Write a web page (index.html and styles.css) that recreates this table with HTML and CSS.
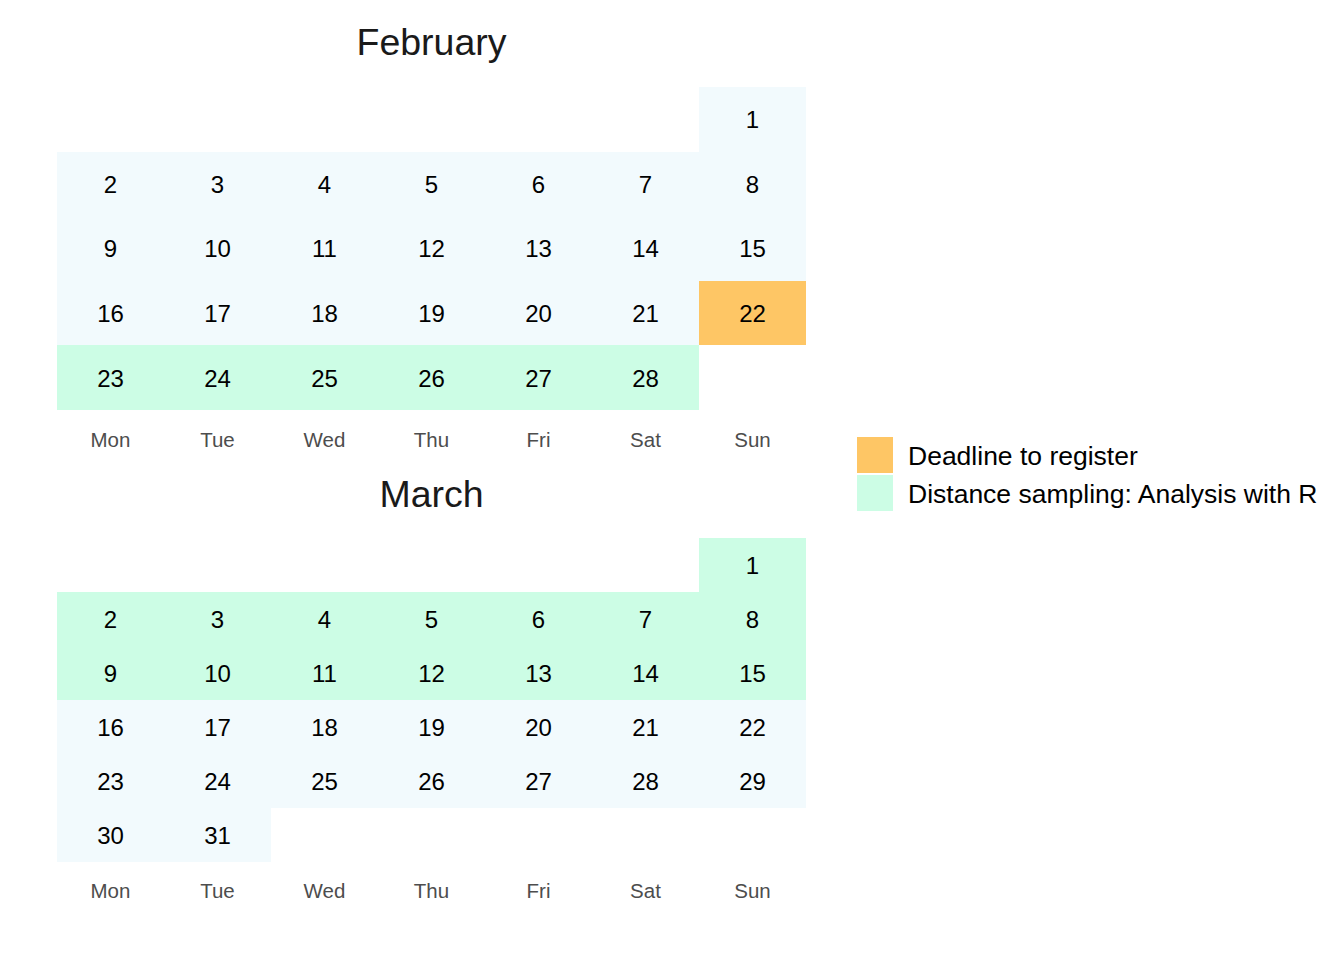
FILE: index.html
```html
<!DOCTYPE html>
<html>
<head>
<meta charset="utf-8">
<link rel="stylesheet" href="styles.css">
</head>
<body>
<div class="page">
  <div class="calendar">
    <div class="month">
      <div class="title feb-title">February</div>
      <div class="grid feb-grid">
        <div class="cell"></div><div class="cell"></div><div class="cell"></div><div class="cell"></div><div class="cell"></div><div class="cell"></div><div class="cell b">1</div>
        <div class="cell b">2</div><div class="cell b">3</div><div class="cell b">4</div><div class="cell b">5</div><div class="cell b">6</div><div class="cell b">7</div><div class="cell b">8</div>
        <div class="cell b">9</div><div class="cell b">10</div><div class="cell b">11</div><div class="cell b">12</div><div class="cell b">13</div><div class="cell b">14</div><div class="cell b">15</div>
        <div class="cell b">16</div><div class="cell b">17</div><div class="cell b">18</div><div class="cell b">19</div><div class="cell b">20</div><div class="cell b">21</div><div class="cell o">22</div>
        <div class="cell g">23</div><div class="cell g">24</div><div class="cell g">25</div><div class="cell g">26</div><div class="cell g">27</div><div class="cell g">28</div><div class="cell"></div>
      </div>
      <div class="days feb-days">
        <span>Mon</span><span>Tue</span><span>Wed</span><span>Thu</span><span>Fri</span><span>Sat</span><span>Sun</span>
      </div>
    </div>
    <div class="month">
      <div class="title mar-title">March</div>
      <div class="grid mar-grid">
        <div class="cell"></div><div class="cell"></div><div class="cell"></div><div class="cell"></div><div class="cell"></div><div class="cell"></div><div class="cell g">1</div>
        <div class="cell g">2</div><div class="cell g">3</div><div class="cell g">4</div><div class="cell g">5</div><div class="cell g">6</div><div class="cell g">7</div><div class="cell g">8</div>
        <div class="cell g">9</div><div class="cell g">10</div><div class="cell g">11</div><div class="cell g">12</div><div class="cell g">13</div><div class="cell g">14</div><div class="cell g">15</div>
        <div class="cell b">16</div><div class="cell b">17</div><div class="cell b">18</div><div class="cell b">19</div><div class="cell b">20</div><div class="cell b">21</div><div class="cell b">22</div>
        <div class="cell b">23</div><div class="cell b">24</div><div class="cell b">25</div><div class="cell b">26</div><div class="cell b">27</div><div class="cell b">28</div><div class="cell b">29</div>
        <div class="cell b">30</div><div class="cell b">31</div><div class="cell"></div><div class="cell"></div><div class="cell"></div><div class="cell"></div><div class="cell"></div>
      </div>
      <div class="days mar-days">
        <span>Mon</span><span>Tue</span><span>Wed</span><span>Thu</span><span>Fri</span><span>Sat</span><span>Sun</span>
      </div>
    </div>
  </div>
  <div class="legend">
    <div class="legend-item"><span class="swatch swatch-o"></span><span class="legend-text">Deadline to register</span></div>
    <div class="legend-item"><span class="swatch swatch-g"></span><span class="legend-text">Distance sampling: Analysis with R</span></div>
  </div>
</div>
</body>
</html>
```

FILE: styles.css
```css
html, body {
  margin: 0;
  padding: 0;
  background: #ffffff;
}
body {
  font-family: "Liberation Sans", Arial, sans-serif;
  color: #000;
}
.page {
  display: flex;
  flex-direction: row;
  align-items: flex-start;
  padding-left: 57px;
  width: 1344px;
  height: 960px;
  box-sizing: border-box;
  overflow: hidden;
}
.calendar {
  width: 749px;
  display: flex;
  flex-direction: column;
}
.title {
  display: flex;
  align-items: center;
  justify-content: center;
  font-size: 37.5px;
  color: #1a1a1a;
}
.feb-title {
  height: 85px;
  padding-bottom: 2px;
}
.mar-title {
  height: 50px;
  padding-bottom: 18px;
}
.grid {
  display: grid;
  grid-template-columns: repeat(7, 107px);
}
.feb-grid {
  grid-template-rows: repeat(5, 64.6px);
}
.mar-grid {
  grid-template-rows: repeat(6, 54px);
}
.cell {
  display: flex;
  align-items: center;
  justify-content: center;
  padding-top: 2px;
  box-sizing: border-box;
  font-size: 24px;
  color: #000;
}
.cell.b { background: #f2fafd; }
.cell.g { background: #ccfde5; }
.cell.o { background: #fec665; }
.days {
  display: grid;
  grid-template-columns: repeat(7, 107px);
  align-items: center;
  justify-items: center;
  font-size: 20.5px;
  color: #4d4d4d;
}
.feb-days { height: 60px; }
.mar-days { height: 58px; }
.legend {
  margin-left: 51px;
  margin-top: 437px;
  display: flex;
  flex-direction: column;
  gap: 2px;
}
.legend-item {
  display: flex;
  align-items: center;
  gap: 15px;
}
.swatch {
  width: 36px;
  height: 36px;
  flex: none;
}
.swatch-o { background: #fec665; }
.swatch-g { background: #ccfde5; }
.legend-text {
  font-size: 26.5px;
  white-space: nowrap;
  padding-top: 2px;
}
```
